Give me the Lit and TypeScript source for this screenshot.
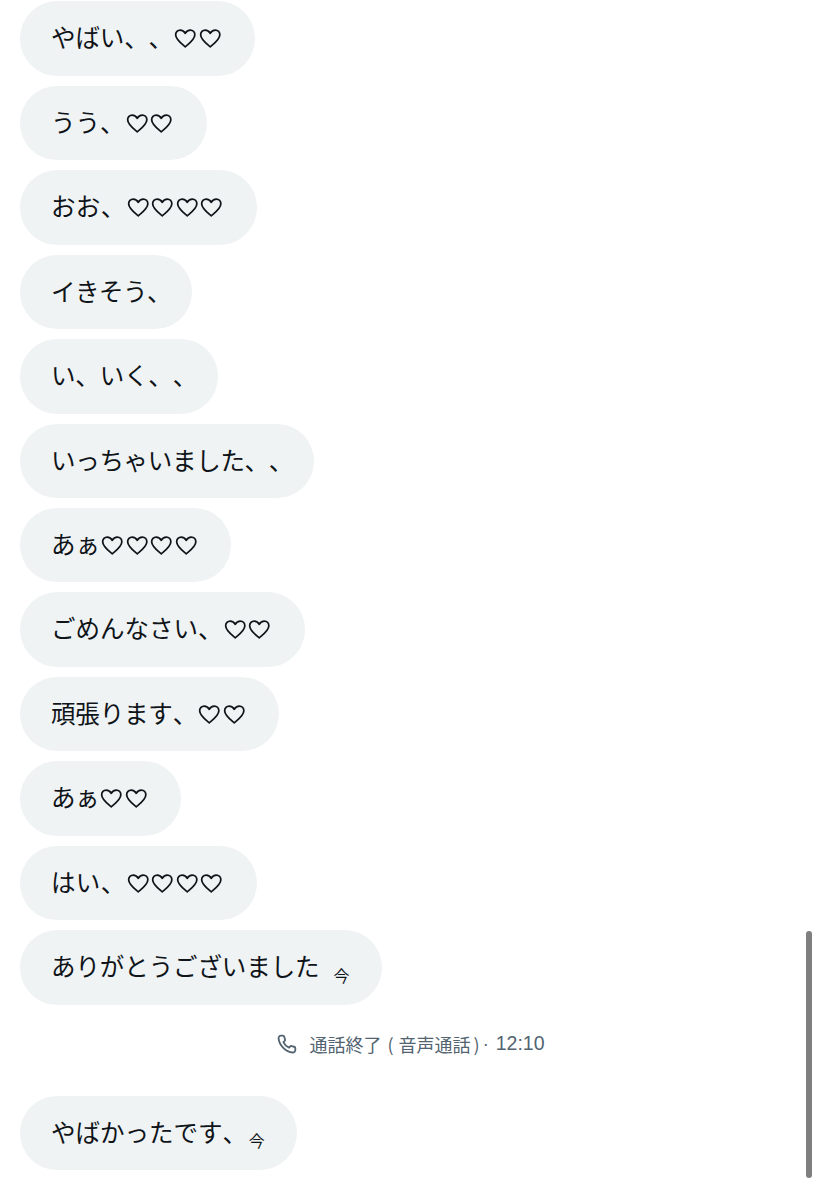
import { LitElement, html, css, nothing } from "lit";
import { customElement } from "lit/decorators.js";
import { classMap } from "lit/directives/class-map.js";

const heart = html`<svg class="heart" viewBox="0 0 24 24" aria-hidden="true"><path d="M12 20.400C8.600 17.600 2.600 13.300 2.600 8.600 2.600 5.900 4.600 4 7 4c2.200 0 4 1.300 5 3.200C13 5.300 14.800 4 17 4c2.400 0 4.400 1.900 4.400 4.600 0 4.700-6 9-9.400 11.800Z"/></svg>`;

interface Msg { text: string; hearts?: number; stamp?: boolean; adj?: number; }

const first: Msg[] = [
  { text: "やばい、、", hearts: 2, adj: -0.5 },
  { text: "うう、", hearts: 2 },
  { text: "おお、", hearts: 4, adj: 1 },
  { text: "イきそう、", adj: -2.5 },
  { text: "い、いく、、", adj: -1 },
  { text: "いっちゃいました、、", adj: -3 },
  { text: "あぁ", hearts: 4 },
  { text: "ごめんなさい、", hearts: 2 },
  { text: "頑張ります、", hearts: 2, adj: -1 },
  { text: "あぁ", hearts: 2, adj: -1 },
  { text: "はい、", hearts: 4, adj: 1 },
  { text: "ありがとうございました", stamp: true, adj: -1 },
];

@customElement("app-root")
export class AppRoot extends LitElement {
  static styles = css`
    :host {
      display: block;
      position: relative;
      width: 819px;
      height: 1200px;
      overflow: hidden;
      background: #fff;
      font-family: "Noto Sans CJK JP", "Noto Sans", sans-serif;
      color: #0f1419;
      text-spacing-trim: space-all;
      font-kerning: none;
    }
    .list {
      display: flex;
      flex-direction: column;
      align-items: flex-start;
      gap: 10px;
      padding: 1.400px 0 0 20px;
    }
    .bubble {
      display: flex;
      align-items: center;
      height: 74.450px;
      box-sizing: border-box;
      padding: 0 33px 0 31px;
      border-radius: 37.250px;
      background: #eff3f4;
      font-size: 24.500px;
      line-height: 1;
      white-space: nowrap;
    }
    .text {
      transform: translateY(-1px);
    }
    .text.trim {
      margin-right: -12.250px;
    }
    .heart {
      width: 24.500px;
      height: 24.500px;
      flex: none;
      fill: none;
      stroke: #0f1419;
      stroke-width: 1.700;
      stroke-linejoin: round;
    }
    .stamp {
      font-size: 16px;
      margin: 15px -1px 0 14px;
      color: #0f1419;
    }
    .call {
      display: flex;
      align-items: center;
      justify-content: center;
      align-self: stretch;
      gap: 13px;
      height: 71px;
      box-sizing: border-box;
      padding: 0 18px 12px 0;
      color: #536471;
      font-size: 18px;
      line-height: 1;
      white-space: nowrap;
    }
    .label {
      display: flex;
      align-items: center;
    }
    .paren-open {
      margin: 0 5px 0 6px;
    }
    .paren-close {
      margin: 0 2px 0 3px;
    }
    .time {
      font-family: "Liberation Sans", sans-serif;
      font-size: 19.500px;
    }
    .dot {
      font-family: "Liberation Sans", sans-serif;
      margin: 0 7px 0 1px;
    }
    .call svg {
      width: 20px;
      height: 20px;
      flex: none;
      fill: none;
      stroke: #536471;
      stroke-width: 2.200;
      stroke-linejoin: round;
    }
    .thumb {
      position: absolute;
      left: 806px;
      top: 931px;
      width: 6px;
      height: 247px;
      border-radius: 3px;
      background: #7f7f7f;
    }
  `;

  private bubble(m: Msg) {
    const trim = !m.hearts && m.text.endsWith("、");
    const spacing = m.adj ? `letter-spacing:${m.adj / m.text.length}px` : "";
    return html`<div class="bubble">
      <span class=${classMap({ text: true, trim })} style=${spacing}>${m.text}</span>
      ${Array.from({ length: m.hearts ?? 0 }, () => heart)}
      ${m.stamp ? html`<span class="stamp">今</span>` : nothing}
    </div>`;
  }

  render() {
    return html`
      <div class="list">
        ${first.map((m) => this.bubble(m))}
        <div class="call">
          <svg viewBox="0 0 24 24" aria-hidden="true"><path d="M22 17.500v1.800a3 3 0 0 1-3.200 2.900C10.500 21.500 2.700 13.700 1.900 5.300A3 3 0 0 1 4.800 2h2a2 2 0 0 1 2 1.500l.8 3a2 2 0 0 1-.6 2L7.700 9.700a13 13 0 0 0 6.700 6.700l1.200-1.300a2 2 0 0 1 2-.6l3 .8a2 2 0 0 1 1.400 2.200Z"/></svg>
          <span class="label">通話終了<span class="paren-open">(</span>音声通話<span class="paren-close">)</span><span class="dot">·</span><span class="time">12:10</span></span>
        </div>
        ${this.bubble({ text: "やばかったです、", stamp: true })}
      </div>
      <div class="thumb"></div>
    `;
  }
}
